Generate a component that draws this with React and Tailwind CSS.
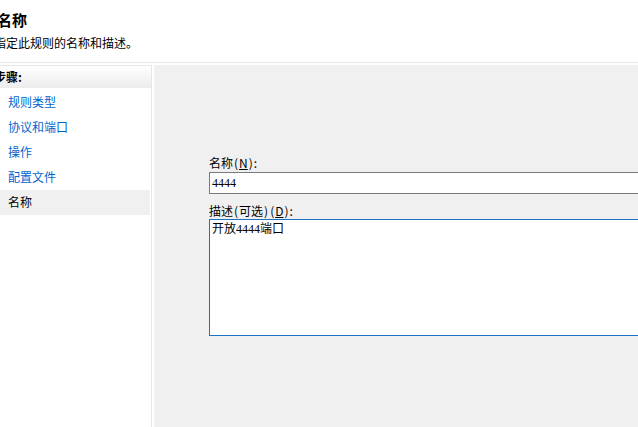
const CJK = { fontFamily: '"Noto Sans CJK SC", "Noto Sans", sans-serif' }
const SERIF = { fontFamily: '"Liberation Serif", "Noto Sans CJK SC", serif' }

const STEPS = ['规则类型', '协议和端口', '操作', '配置文件', '名称']

function Paren({ children }) {
  return <span className="mx-[1px]">{children}</span>
}

export default function App() {
  return (
    <div className="w-[638px] h-[427px] overflow-hidden bg-white flex flex-col text-black" style={CJK}>
      <div className="h-[62px] shrink-0 pt-[9px]">
        <div className="-ml-[3px] text-[15px] font-bold leading-[22px]">名称</div>
        <div className="-ml-[6px] mt-[2px] text-[12px] leading-[20px]">指定此规则的名称和描述。</div>
      </div>
      <div className="h-px shrink-0 bg-[#e8e8e8]" />
      <div className="flex flex-1 min-h-0 pt-[2px]">
        <div className="w-[152px] shrink-0 border-r border-[#e6e6e6] bg-white">
          <div className="h-[23px] border-t border-[#e6e6e6] bg-gradient-to-b from-white to-[#ececec]">
            <div className="-ml-[6px] text-[12px] font-bold leading-[21px]">步骤:</div>
          </div>
          <div className="pt-[2px] pr-px">
            {STEPS.map((s, i) => {
              const active = i === STEPS.length - 1
              return (
                <div
                  key={s}
                  className={active
                    ? 'h-[25px] pl-[8px] text-[12px] leading-[24px] bg-[#f0f0f0] text-black'
                    : 'h-[25px] pl-[8px] text-[12px] leading-[24px] text-[#0066cc]'}
                >
                  {s}
                </div>
              )
            })}
          </div>
        </div>
        <div className="w-[2px] shrink-0" />
        <div className="flex-1 bg-[#f0f0f0] pt-[91px] pl-[55px] overflow-hidden">
          <div className="text-[12px] leading-[14px]">名称<Paren>(</Paren><span className="underline">N</span><Paren>)</Paren>:</div>
          <div className="mt-[2px] h-[22px] w-[460px] border border-[#7a7a7a] bg-white px-[2px] text-[12px] leading-[20px] font-medium" style={SERIF}>
            4444
          </div>
          <div className="mt-[10px] text-[12px] leading-[14px]">描述<Paren>(</Paren>可选<Paren>)</Paren><Paren>(</Paren><span className="underline">D</span><Paren>)</Paren>:</div>
          <div className="mt-px h-[117px] w-[460px] border border-[#1a72c4] bg-white px-[2px] text-[12px] leading-[16px]">
            开放<span className="font-medium" style={SERIF}>4444</span>端口
          </div>
        </div>
      </div>
    </div>
  )
}
